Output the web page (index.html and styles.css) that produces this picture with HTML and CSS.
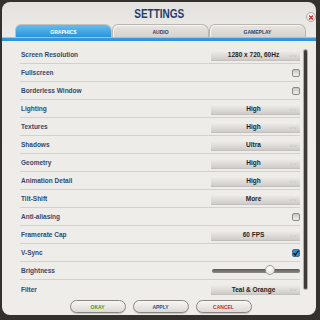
FILE: index.html
```html
<!DOCTYPE html>
<html>
<head>
<meta charset="utf-8">
<link rel="stylesheet" href="styles.css">
</head>
<body>
<div class="panel">
  <div class="titlebar">
    <span class="title">SETTINGS</span>
    <span class="close"><svg width="9" height="9" viewBox="0 0 9 9"><path d="M2.9 2.9 L6.1 6.1 M6.1 2.9 L2.9 6.1" stroke="#d3202a" stroke-width="1.5" stroke-linecap="round"/></svg></span>
  </div>
  <div class="tabs">
    <div class="tab active">GRAPHICS</div>
    <div class="tab">AUDIO</div>
    <div class="tab">GAMEPLAY</div>
  </div>
  <div class="tabline"></div>
  <div class="content">
    <div class="rows">
      <div class="row"><span class="label">Screen Resolution</span><span class="select">1280 x 720, 60Hz<svg class="arr" width="8" height="4" viewBox="0 0 8 4"><path d="M0.5 0.8 L2 2.8 L3.5 0.8 M4.5 0.8 L6 2.8 L7.5 0.8" fill="none" stroke="#c9c7c3" stroke-width="0.8"/></svg></span></div>
      <div class="row"><span class="label">Fullscreen</span><span class="check"></span></div>
      <div class="row"><span class="label">Borderless Window</span><span class="check"></span></div>
      <div class="row"><span class="label">Lighting</span><span class="select">High<svg class="arr" width="8" height="4" viewBox="0 0 8 4"><path d="M0.5 0.8 L2 2.8 L3.5 0.8 M4.5 0.8 L6 2.8 L7.5 0.8" fill="none" stroke="#c9c7c3" stroke-width="0.8"/></svg></span></div>
      <div class="row"><span class="label">Textures</span><span class="select">High<svg class="arr" width="8" height="4" viewBox="0 0 8 4"><path d="M0.5 0.8 L2 2.8 L3.5 0.8 M4.5 0.8 L6 2.8 L7.5 0.8" fill="none" stroke="#c9c7c3" stroke-width="0.8"/></svg></span></div>
      <div class="row"><span class="label">Shadows</span><span class="select">Ultra<svg class="arr" width="8" height="4" viewBox="0 0 8 4"><path d="M0.5 0.8 L2 2.8 L3.5 0.8 M4.5 0.8 L6 2.8 L7.5 0.8" fill="none" stroke="#c9c7c3" stroke-width="0.8"/></svg></span></div>
      <div class="row"><span class="label">Geometry</span><span class="select">High<svg class="arr" width="8" height="4" viewBox="0 0 8 4"><path d="M0.5 0.8 L2 2.8 L3.5 0.8 M4.5 0.8 L6 2.8 L7.5 0.8" fill="none" stroke="#c9c7c3" stroke-width="0.8"/></svg></span></div>
      <div class="row"><span class="label">Animation Detail</span><span class="select">High<svg class="arr" width="8" height="4" viewBox="0 0 8 4"><path d="M0.5 0.8 L2 2.8 L3.5 0.8 M4.5 0.8 L6 2.8 L7.5 0.8" fill="none" stroke="#c9c7c3" stroke-width="0.8"/></svg></span></div>
      <div class="row"><span class="label">Tilt-Shift</span><span class="select">More<svg class="arr" width="8" height="4" viewBox="0 0 8 4"><path d="M0.5 0.8 L2 2.8 L3.5 0.8 M4.5 0.8 L6 2.8 L7.5 0.8" fill="none" stroke="#c9c7c3" stroke-width="0.8"/></svg></span></div>
      <div class="row"><span class="label">Anti-aliasing</span><span class="check"></span></div>
      <div class="row"><span class="label">Framerate Cap</span><span class="select">60 FPS<svg class="arr" width="8" height="4" viewBox="0 0 8 4"><path d="M0.5 0.8 L2 2.8 L3.5 0.8 M4.5 0.8 L6 2.8 L7.5 0.8" fill="none" stroke="#c9c7c3" stroke-width="0.8"/></svg></span></div>
      <div class="row"><span class="label">V-Sync</span><span class="check on"><svg width="8" height="8" viewBox="0 0 8 8"><path d="M1.6 4.2 L3.3 6 L6.6 1.6" fill="none" stroke="#111" stroke-width="1.4"/></svg></span></div>
      <div class="row"><span class="label">Brightness</span><span class="slider"><span class="thumb"></span></span></div>
      <div class="row last"><span class="label">Filter</span><span class="select">Teal &amp; Orange<svg class="arr" width="8" height="4" viewBox="0 0 8 4"><path d="M0.5 0.8 L2 2.8 L3.5 0.8 M4.5 0.8 L6 2.8 L7.5 0.8" fill="none" stroke="#c9c7c3" stroke-width="0.8"/></svg></span></div>
    </div>
    <div class="scrollbar"></div>
  </div>
  <div class="buttons">
    <span class="btn ok">OKAY</span>
    <span class="btn apply">APPLY</span>
    <span class="btn cancel">CANCEL</span>
  </div>
</div>
</body>
</html>
```
FILE: styles.css
```css
html, body {
  margin: 0;
  padding: 0;
}
body {
  width: 320px;
  height: 320px;
  background: #34302b;
  font-family: "Liberation Sans", Arial, sans-serif;
  overflow: hidden;
}
.panel {
  position: relative;
  margin: 2px 0 0 2px;
  width: 314px;
  height: 313px;
  border-radius: 8px;
  background: linear-gradient(#e4e2de, #eeece9 40px, #efedea);
  display: flex;
  flex-direction: column;
  box-sizing: border-box;
}
.titlebar {
  height: 22px;
  display: flex;
  align-items: center;
  justify-content: center;
}
.title {
  display: inline-block;
  font-weight: bold;
  font-size: 12.5px;
  color: #1f3c6a;
  transform: scaleX(0.8);
  margin-top: 1px;
}
.close {
  position: absolute;
  left: 304px;
  top: 10px;
  width: 10px;
  height: 10px;
  box-sizing: border-box;
  border-radius: 50%;
  border: 1px solid #b3b0ab;
  background: radial-gradient(circle at 40% 35%, #fdfcfa, #d6d3ce);
  display: flex;
  align-items: center;
  justify-content: center;
}
.tabs {
  height: 13px;
  display: flex;
  padding-left: 13px;
}
.tab {
  width: 97px;
  box-sizing: border-box;
  border: 1.5px solid #b9b6b1;
  border-bottom: none;
  border-radius: 6px 7px 0 0;
  background: linear-gradient(#e7e5e1, #d6d3cf);
  color: #2a3f66;
  font-size: 5px;
  font-weight: bold;
  display: flex;
  align-items: center;
  justify-content: center;
  padding-top: 1px;
  box-shadow: inset 1px 1px 0 #f6f5f2;
}
.tab.active {
  border-color: #c3c0bb;
  background: linear-gradient(#62bdf0, #2a94dc);
  color: #ffffff;
  box-shadow: none;
}
.tabline {
  height: 4px;
  background: linear-gradient(#8bcaf2 0, #8bcaf2 1px, #3a9be0 1px, #2f8fd8);
}
.content {
  display: flex;
  padding: 5px 0 0 18px;
}
.rows {
  width: 280px;
  display: flex;
  flex-direction: column;
}
.row {
  height: 18px;
  box-sizing: border-box;
  border-bottom: 1px solid #d3d1cd;
  display: flex;
  align-items: center;
  justify-content: space-between;
}
.row.last {
  border-bottom: none;
}
.label {
  padding-left: 1px;
  font-size: 6.5px;
  font-weight: bold;
  color: #34496b;
}
.select {
  position: relative;
  width: 89px;
  height: 11px;
  box-sizing: border-box;
  background: linear-gradient(#f1f0ed, #cecbc8);
  border-bottom: 1px solid #c2c0bc;
  display: flex;
  align-items: center;
  justify-content: center;
  padding-right: 4px;
  font-size: 6.5px;
  font-weight: bold;
  color: #1f1f1f;
  margin-top: 1px;
}
.arr {
  position: absolute;
  right: 3px;
  top: 4px;
}
.check {
  width: 8px;
  height: 8px;
  box-sizing: border-box;
  border: 1px solid #8d8a86;
  border-radius: 2px;
  background: linear-gradient(#c9c7c3, #f1f0ed);
  display: flex;
}
.check.on {
  background: #2a8fd2;
  border-color: #4b6c88;
}
.check.on svg {
  margin: -1px;
}
.slider {
  position: relative;
  width: 88px;
  height: 4px;
  border-radius: 2px;
  background: linear-gradient(#5d5955, #8e8a86);
  margin-top: 1px;
}
.thumb {
  position: absolute;
  left: 53px;
  top: -4px;
  width: 10px;
  height: 10px;
  box-sizing: border-box;
  border-radius: 50%;
  border: 1px solid #a3a09c;
  background: radial-gradient(circle at 45% 35%, #ffffff, #dddbd7);
}
.scrollbar {
  margin: 4px 0 0 4px;
  width: 3px;
  height: 239px;
  border-radius: 2px;
  background: #3d3935;
  box-shadow: 0 0 0 1px #b1aeaa;
}
.buttons {
  display: flex;
  justify-content: center;
  gap: 7px;
  margin-top: 2px;
  padding-left: 3px;
}
.btn {
  width: 56px;
  height: 13px;
  box-sizing: border-box;
  border: 1.5px solid #8a8782;
  border-radius: 7px;
  background: linear-gradient(#f7f6f3, #dcdad6);
  box-shadow: 0 1px 0 #c7c4bf;
  display: flex;
  align-items: center;
  justify-content: center;
  font-size: 5px;
  font-weight: bold;
}
.ok { color: #3d9b22; }
.apply { color: #2b4c8c; }
.cancel { color: #d7242a; }
```
